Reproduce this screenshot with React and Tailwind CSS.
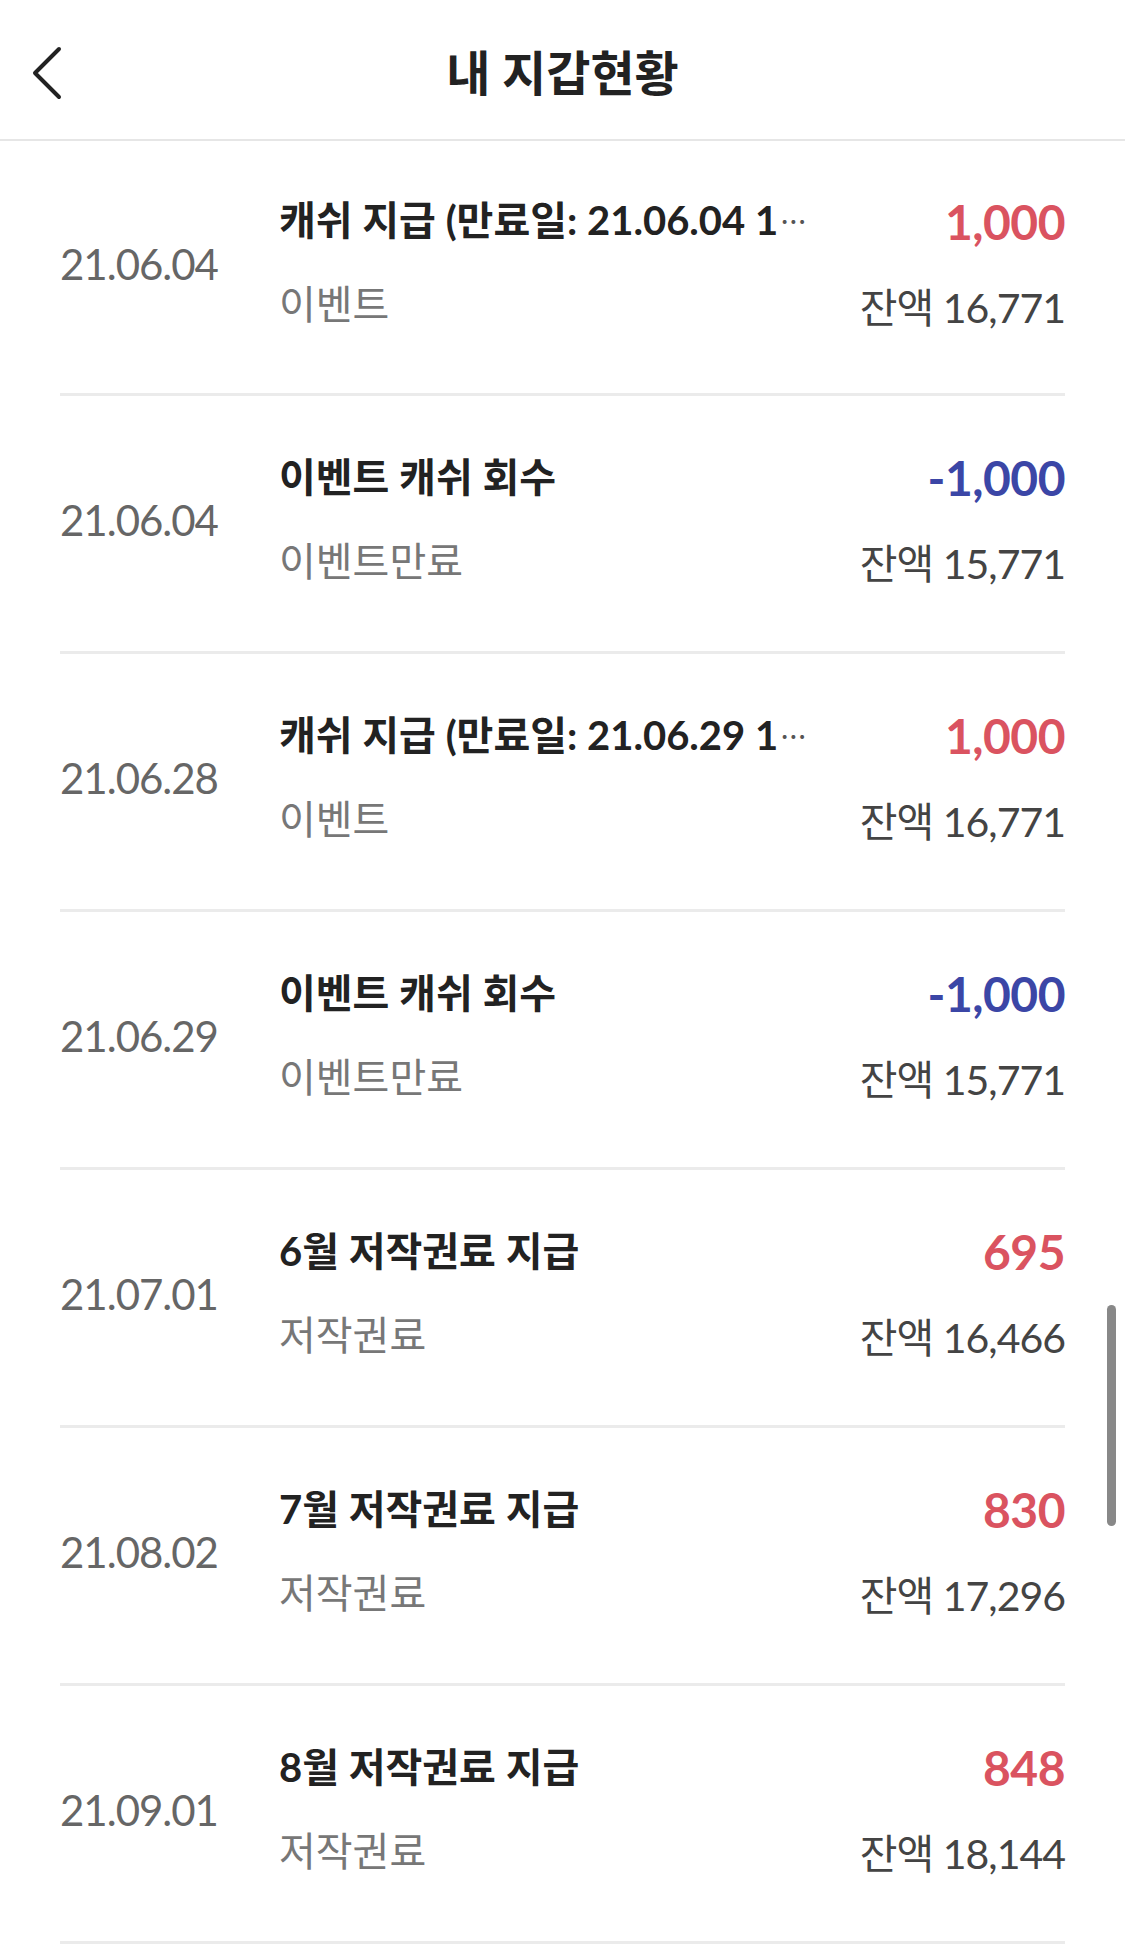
import React from 'react';

const rows = [
    { date: '21.06.04', title: '캐쉬 지급 (만료일: 21.06.04 1', cut: true, sub: '이벤트', amount: '1,000', plus: true, balance: '16,771' },
    { date: '21.06.04', title: '이벤트 캐쉬 회수', sub: '이벤트만료', amount: '-1,000', plus: false, balance: '15,771' },
    { date: '21.06.28', title: '캐쉬 지급 (만료일: 21.06.29 1', cut: true, sub: '이벤트', amount: '1,000', plus: true, balance: '16,771' },
    { date: '21.06.29', title: '이벤트 캐쉬 회수', sub: '이벤트만료', amount: '-1,000', plus: false, balance: '15,771' },
    { date: '21.07.01', title: '6월 저작권료 지급', sub: '저작권료', amount: '695', plus: true, balance: '16,466' },
    { date: '21.08.02', title: '7월 저작권료 지급', sub: '저작권료', amount: '830', plus: true, balance: '17,296' },
    { date: '21.09.01', title: '8월 저작권료 지급', sub: '저작권료', amount: '848', plus: true, balance: '18,144' },
];

const font = "font-['Lato','Noto_Sans_CJK_KR',sans-serif]";

function WalletRow({ row, first }) {
    return (
        <div className={`mx-[60px] flex items-center border-b-[3px] border-[#ebebeb] pb-[7px] ${first ? 'h-[255px]' : 'h-[258px]'}`}>
            <div className="w-[219px] shrink-0 text-[42px] leading-[46px] tracking-[-1px] text-[#666]">
                {row.date}
            </div>
            <div className="flex min-w-0 flex-1 flex-col pb-[3px]">
                <div className="whitespace-nowrap text-[40px] font-bold leading-[46px] text-[#222]">
                    {row.title}
                    {row.cut && <span className="ml-[3px] font-normal tracking-[2px] text-[#555] text-[26px] align-[5px]">···</span>}
                </div>
                <div className="mt-[38px] text-[40px] leading-[46px] text-[#777]">
                    {row.sub}
                </div>
            </div>
            <div className="flex shrink-0 flex-col items-end pb-[2px]">
                <div className={`text-[48px] font-bold leading-[54px] tracking-[-0.5px] ${row.plus ? 'text-[#da5360]' : 'text-[#3b46a6]'}`}>
                    {row.amount}
                </div>
                <div className="mt-[36px] text-[41px] leading-[46px] tracking-[-1px] text-[#444]">
                    잔액 {row.balance}
                </div>
            </div>
        </div>
    );
}

export default function App() {
    return (
        <div className={`relative h-[1952px] w-[1125px] overflow-hidden bg-white ${font}`}>
            <header className="grid h-[141px] grid-cols-[1fr_auto_1fr] items-center border-b-2 border-[#e6e6e6] pt-[6px]">
                <button className="ml-[32px] flex h-[56px] w-[40px] items-center">
                    <svg width="30" height="54" viewBox="0 0 30 54" fill="none">
                        <path d="M27 3 L3 27 L27 51" stroke="#222" strokeWidth="4" strokeLinecap="round" strokeLinejoin="round" />
                    </svg>
                </button>
                <h1 className="text-[48px] font-bold text-[#222]">내 지갑현황</h1>
                <div />
            </header>
            {rows.map((row, i) => (
                <WalletRow key={i} row={row} first={i === 0} />
            ))}
            <div className="absolute right-[9px] top-[1305px] h-[221px] w-[9px] rounded-full bg-[#888]" />
        </div>
    );
}
